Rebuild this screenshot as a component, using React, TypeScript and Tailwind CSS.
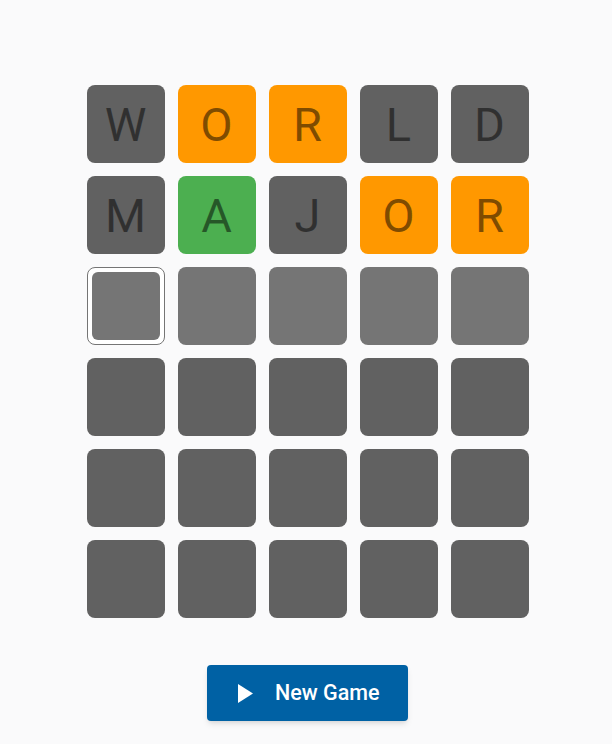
import React from 'react';

type Tile = { letter: string; state: 'absent' | 'present' | 'correct' | 'active' | 'selected' | 'empty' };

const rows: Tile[][] = [
  [
    { letter: 'W', state: 'absent' },
    { letter: 'O', state: 'present' },
    { letter: 'R', state: 'present' },
    { letter: 'L', state: 'absent' },
    { letter: 'D', state: 'absent' },
  ],
  [
    { letter: 'M', state: 'absent' },
    { letter: 'A', state: 'correct' },
    { letter: 'J', state: 'absent' },
    { letter: 'O', state: 'present' },
    { letter: 'R', state: 'present' },
  ],
  [
    { letter: '', state: 'selected' },
    { letter: '', state: 'active' },
    { letter: '', state: 'active' },
    { letter: '', state: 'active' },
    { letter: '', state: 'active' },
  ],
  ...Array.from({ length: 3 }, () =>
    Array.from({ length: 5 }, () => ({ letter: '', state: 'empty' as const }))
  ),
];

const bg: Record<Tile['state'], string> = {
  absent: 'bg-[#616161]',
  present: 'bg-[#ff9800]',
  correct: 'bg-[#4caf50]',
  active: 'bg-[#757575]',
  selected: 'bg-[#757575]',
  empty: 'bg-[#616161]',
};

function Cell({ tile }: { tile: Tile }) {
  if (tile.state === 'selected') {
    return (
      <div className="w-[78px] h-[78px] rounded-lg border border-[#757575] bg-white p-[4px]">
        <div className="w-full h-full rounded-md bg-[#757575]" />
      </div>
    );
  }
  return (
    <div
      className={`w-[78px] h-[78px] rounded-lg flex items-center justify-center text-[47px] leading-none text-black/50 ${bg[tile.state]}`}
    >
      {tile.letter}
    </div>
  );
}

export default function App() {
  return (
    <div
      className="min-h-[744px] bg-[#fafafb] flex flex-col items-center pt-[85px] pl-[3px]"
      style={{ fontFamily: 'Roboto, "Noto Sans", sans-serif' }}
    >
      <div className="grid grid-cols-5 gap-[13px]">
        {rows.map((row, r) =>
          row.map((tile, c) => <Cell key={`${r}-${c}`} tile={tile} />)
        )}
      </div>

      <button className="mt-[47px] w-[201px] h-[56px] rounded bg-[#0061a4] text-white flex items-center pl-[30px] gap-[21px] shadow-md">
        <svg width="17" height="21" viewBox="0 0 17 21" fill="white">
          <path d="M1 1 L16 10.5 L1 20 Z" />
        </svg>
        <span className="text-[21.5px] font-medium">New Game</span>
      </button>
    </div>
  );
}
